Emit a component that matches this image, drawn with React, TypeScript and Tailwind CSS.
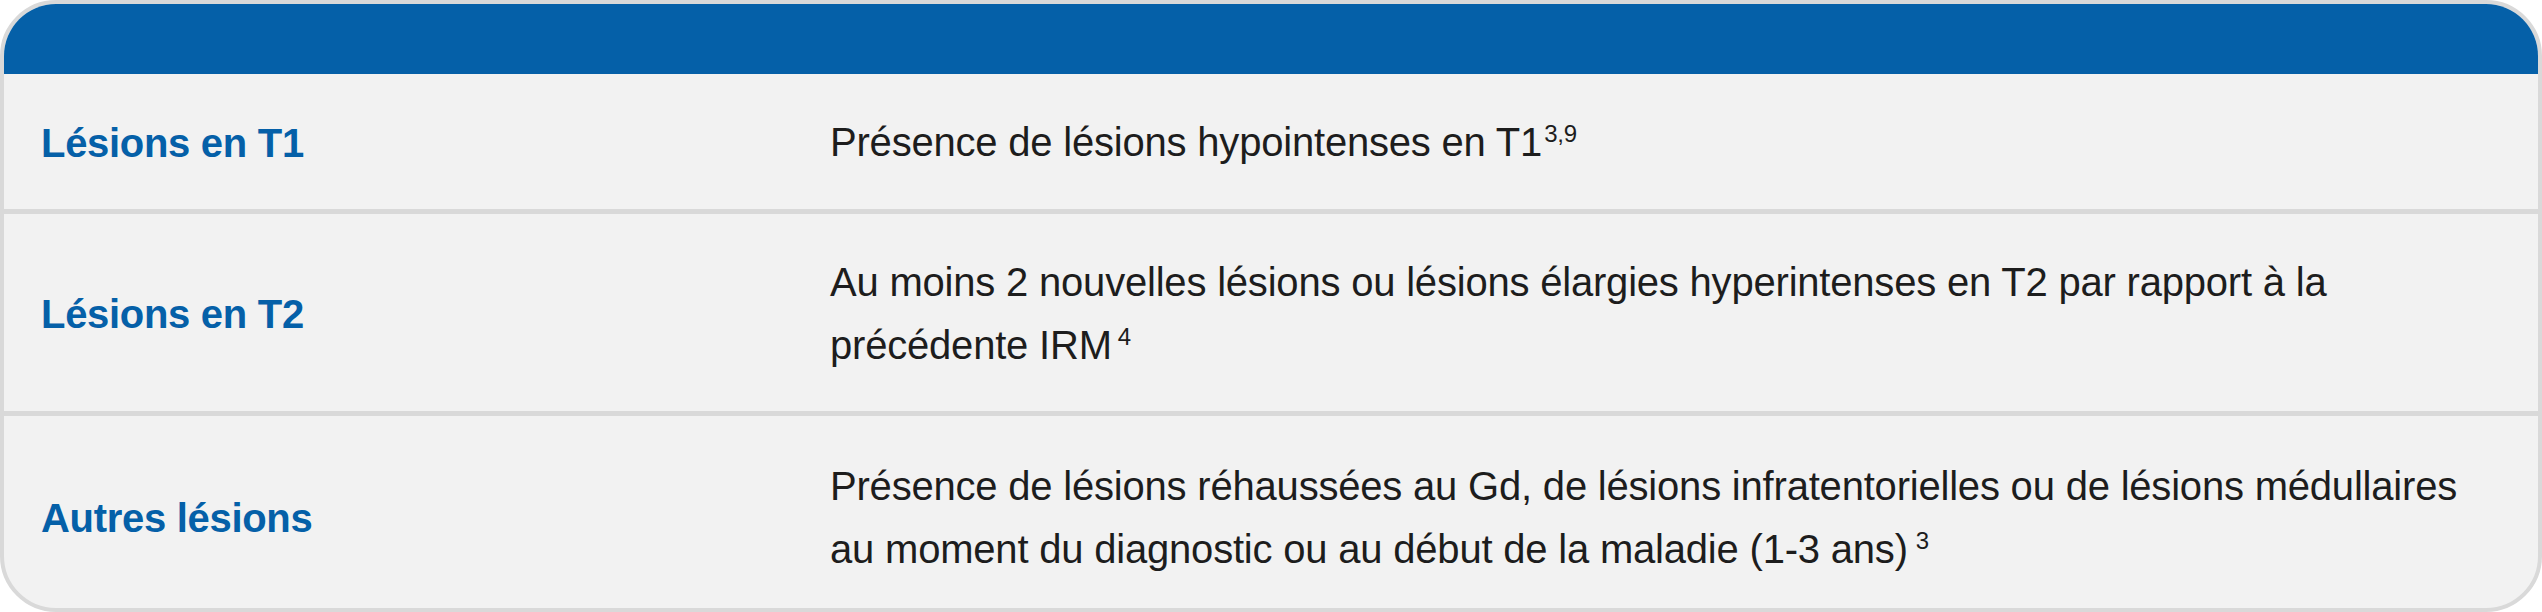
import React from "react";

type Row = {
  label: string;
  h: string;
  content: React.ReactNode;
};

const Sup = ({ children, ml }: { children: React.ReactNode; ml: string }) => (
  <sup className={`text-[24px] leading-none relative top-[-14px] ${ml}`}>{children}</sup>
);

export default function App() {
  const rows: Row[] = [
    {
      label: "Lésions en T1",
      h: "h-[140px] pt-[2px]",
      content: (
        <>
          Présence de lésions hypointenses en T1
          <Sup ml="ml-[2px]">3,9</Sup>
        </>
      ),
    },
    {
      label: "Lésions en T2",
      h: "h-[202px] pt-[2px]",
      content: (
        <>
          Au moins 2 nouvelles lésions ou lésions élargies hyperintenses en T2 par rapport à la
          <br />
          précédente IRM
          <Sup ml="ml-[6px]">4</Sup>
        </>
      ),
    },
    {
      label: "Autres lésions",
      h: "h-[192px] pt-[12px]",
      content: (
        <>
          Présence de lésions réhaussées au Gd, de lésions infratentorielles ou de lésions médullaires
          <br />
          au moment du diagnostic ou au début de la maladie (1-3 ans)
          <Sup ml="ml-[8px]">3</Sup>
        </>
      ),
    },
  ];

  return (
    <div className="w-[2542px] h-[612px] bg-white font-['Liberation_Sans',Arial,sans-serif]">
      <div className="w-full h-full border-4 border-[#d9d9d9] rounded-[56px] overflow-hidden bg-[#f2f2f2] flex flex-col">
        <div className="h-[70px] bg-[#0560a8] shrink-0" />
        {rows.map((r, i) => (
          <div
            key={r.label}
            className={`${r.h} shrink-0 grid grid-cols-[789px_1fr] items-center pl-[37px] pr-[40px] ${
              i < rows.length - 1 ? "border-b-[5px] border-[#d9d9d9]" : ""
            }`}
          >
            <div className="text-[40px] font-bold tracking-[-0.3px] text-[#0560a8] leading-[60px]">
              {r.label}
            </div>
            <div className="text-[40px] tracking-[-0.2px] text-[#1d1d1d] leading-[63px] whitespace-nowrap">
              {r.content}
            </div>
          </div>
        ))}
      </div>
    </div>
  );
}
